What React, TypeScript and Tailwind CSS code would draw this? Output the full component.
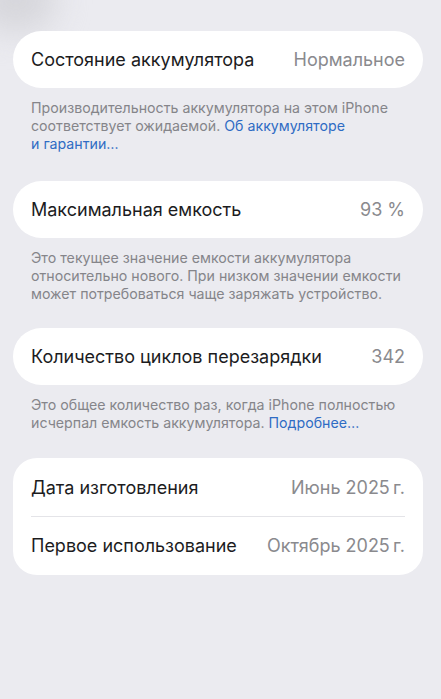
import React from "react";

const Row = ({ label, value }: { label: string; value: string }) => (
  <div className="flex h-[57px] items-center justify-between px-[18px]">
    <span className="text-[18px] text-[#1c1c1e]">{label}</span>
    <span className="text-[18px] text-[#8a8a8e]">{value}</span>
  </div>
);

const Note = ({ children }: { children: React.ReactNode }) => (
  <p className="mt-[11px] pl-[18px] pr-[12px] text-[14.2px] leading-[18px] text-[#85858a]">{children}</p>
);

const Link = ({ children }: { children: React.ReactNode }) => (
  <span className="text-[#2f6cc4]">{children}</span>
);

export default function App() {
  return (
    <div
      className="relative min-h-[699px] w-[441px] overflow-hidden bg-[#ebebf0] pl-[13px] pr-[18px] pt-[31px]"
      style={{ fontFamily: "Inter, 'Noto Sans', sans-serif" }}
    >
      <div className="absolute -left-6 -top-8 h-16 w-20 rounded-full bg-[#d6d6db] blur-lg" />

      <div className="relative rounded-full bg-white">
        <Row label="Состояние аккумулятора" value="Нормальное" />
      </div>
      <Note>
        Производительность аккумулятора на этом iPhone соответствует ожидаемой.{" "}
        <Link>Об аккумуляторе и&nbsp;гарантии…</Link>
      </Note>

      <div className="mt-[28px] rounded-full bg-white">
        <Row label="Максимальная емкость" value="93 %" />
      </div>
      <Note>
        Это текущее значение емкости аккумулятора относительно нового. При низком значении емкости
        может потребоваться чаще заряжать устройство.
      </Note>

      <div className="mt-[25px] rounded-full bg-white">
        <Row label="Количество циклов перезарядки" value="342" />
      </div>
      <Note>
        Это общее количество раз, когда iPhone полностью исчерпал емкость аккумулятора.{" "}
        <Link>Подробнее…</Link>
      </Note>

      <div className="mt-[26px] rounded-[24px] bg-white py-[1px]">
        <Row label="Дата изготовления" value={"Июнь 2025\u2009г."} />
        <div className="mx-[18px] h-px bg-[#e4e4e8]" />
        <Row label="Первое использование" value={"Октябрь 2025\u2009г."} />
      </div>
    </div>
  );
}
